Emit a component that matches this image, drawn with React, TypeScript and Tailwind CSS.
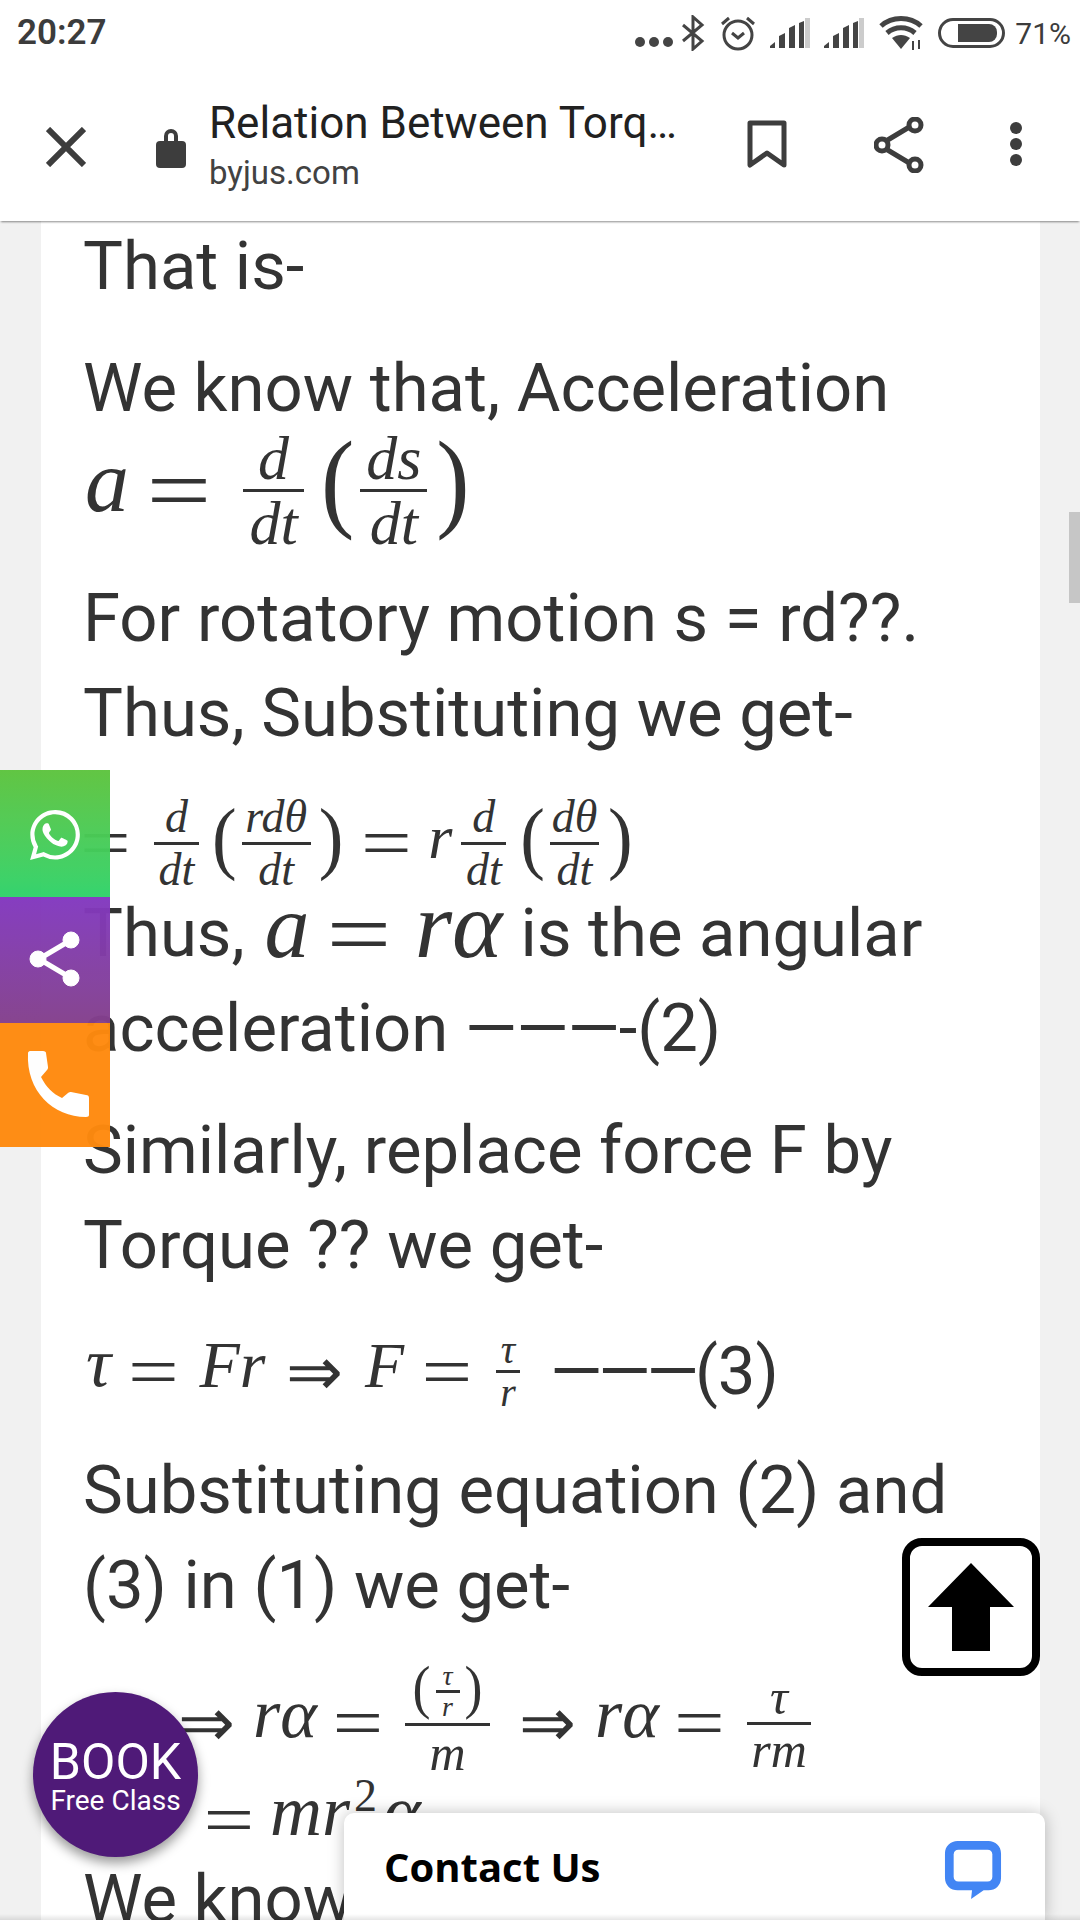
import type { ReactNode } from "react";

const serif = "font-['Liberation_Serif',serif]";

function Mi({ children, size = 64, className = "" }: { children: ReactNode; size?: number; className?: string }) {
  return (
    <span className={`${serif} block shrink-0 text-center italic leading-none ${className}`} style={{ fontSize: size }}>
      {children}
    </span>
  );
}

function Frac({
  num,
  den,
  width,
  size = 62,
  gap = 0,
  pad = 0,
  className = "",
}: {
  num: ReactNode;
  den: ReactNode;
  width: number;
  size?: number;
  gap?: number;
  pad?: number;
  className?: string;
}) {
  return (
    <span
      className={`${serif} flex shrink-0 flex-col items-center italic leading-none ${className}`}
      style={{ fontSize: size, width, paddingBottom: pad }}
    >
      <span style={{ marginBottom: gap }}>{num}</span>
      <span className="h-[3px] w-full bg-[#333]" />
      <span style={{ marginTop: gap }}>{den}</span>
    </span>
  );
}

function Paren({ side, size = 100, className = "" }: { side: string; size?: number; className?: string }) {
  return (
    <span className={`${serif} block shrink-0 font-normal not-italic leading-none ${className}`} style={{ fontSize: size }}>
      <span className="block -translate-y-[0.09em] scale-y-110">{side}</span>
    </span>
  );
}

function Eq({ size = 72, className = "" }: { size?: number; className?: string }) {
  return (
    <span className={`${serif} block shrink-0 scale-x-[1.25] text-center font-normal not-italic leading-none ${className}`} style={{ fontSize: size }}>
      =
    </span>
  );
}

function Arrow({ className = "" }: { className?: string }) {
  return (
    <span className={`block shrink-0 text-center font-['DejaVu_Sans_ExtraLight','DejaVu_Sans',sans-serif] text-[68px] font-extralight leading-none ${className}`}>
      ⇒
    </span>
  );
}

function StatusBar() {
  return (
    <div className="flex h-[66px] items-center justify-between bg-white pl-[17px] pr-[9px] text-[#3c3c3c]">
      <span className="text-[35px] font-semibold">20:27</span>
      <div className="flex items-center">
        <svg width="44" height="14" viewBox="0 0 44 14" fill="#444" className="mt-[18px]">
          <circle cx="7" cy="7" r="5" />
          <circle cx="21" cy="7" r="5" />
          <circle cx="35" cy="7" r="5" />
        </svg>
        <svg width="26" height="36" viewBox="0 0 26 36" fill="none" stroke="#444" strokeWidth="3" className="ml-[3px]">
          <path d="M3 10 22 26 13 34V2l9 8L3 26" />
        </svg>
        <svg width="38" height="36" viewBox="0 0 38 36" fill="none" stroke="#444" strokeWidth="3" className="ml-[13px]">
          <circle cx="19" cy="20" r="14" />
          <path d="M13 18l6 5 6-5M3 9l7-6M35 9l-7-6" />
        </svg>
        <svg width="40" height="30" viewBox="0 0 40 30" className="ml-[13px]">
          <path d="M0 30v-2l5-4v6zM9 30V18l6-3v15zM19 30V10l6-3v23z M29 30V5l5-2v27z" fill="#444" />
          <path d="M35 30V0h5v30z" fill="#ccc" />
        </svg>
        <svg width="40" height="30" viewBox="0 0 40 30" className="ml-[14px]">
          <path d="M0 30v-2l5-4v6zM9 30V18l6-3v15zM19 30V10l6-3v23z M29 30V5l5-2v27z" fill="#444" />
          <path d="M35 30V0h5v30z" fill="#ccc" />
        </svg>
        <svg width="46" height="34" viewBox="0 0 46 34" fill="none" stroke="#444" strokeWidth="5" className="ml-[15px]">
          <path d="M2 10C13 0 31 0 42 10M8 17c8-7 20-7 28 0" />
          <path d="M13 22c6-4 12-4 18 0l-9 11z" fill="#444" stroke="none" />
          <path d="M34 25v9M40 24v9" strokeWidth="2" />
        </svg>
        <span className="ml-[13px] flex h-[30px] w-[67px] items-center rounded-[15px] border-[3px] border-[#444] pl-[17px] pr-[5px]">
          <span className="h-[18px] w-full rounded-r-[8px] bg-[#444]" />
        </span>
        <span className="ml-[10px] text-[30px]">71%</span>
      </div>
    </div>
  );
}

function Toolbar() {
  return (
    <div className="relative z-10 flex h-[155px] items-center bg-white pl-[46px] shadow-[0_2px_2px_-1px_rgba(0,0,0,0.45)]">
      <svg width="40" height="40" viewBox="0 0 40 40" stroke="#3d3d3d" strokeWidth="6" className="mt-[6px] shrink-0">
        <path d="M2 2l36 36M38 2 2 38" />
      </svg>
      <svg width="32" height="42" viewBox="0 0 32 42" fill="#3d3d3d" className="ml-[69px] mt-[6px] shrink-0">
        <path d="M9 16V10a7 7 0 0 1 14 0v6h-4V10a3 3 0 0 0-6 0v6z" />
        <rect x="1" y="15" width="30" height="27" rx="4" />
      </svg>
      <div className="ml-[22px] mt-[4px] w-[521px] shrink-0">
        <div className="text-[44px] leading-[52px] text-[#212121]">Relation Between Torq…</div>
        <div className="mt-[2px] text-[33px] leading-[44px] text-[#424242]">byjus.com</div>
      </div>
      <svg width="40" height="50" viewBox="0 0 40 50" fill="none" stroke="#3d3d3d" strokeWidth="5" className="ml-[17px] mt-[2px] shrink-0">
        <path d="M3 3h34v42L20 33 3 45z" strokeLinejoin="round" />
      </svg>
      <svg width="50" height="56" viewBox="0 0 50 56" fill="none" stroke="#3d3d3d" strokeWidth="5" className="ml-[87px] mt-[2px] shrink-0">
        <path d="M12 24 37 9M12 32l25 15" />
        <circle cx="8" cy="28" r="6" />
        <circle cx="41" cy="8" r="6" />
        <circle cx="41" cy="48" r="6" />
      </svg>
      <svg width="14" height="46" viewBox="0 0 14 46" fill="#3d3d3d" className="ml-[85px] shrink-0">
        <circle cx="7" cy="7" r="6" />
        <circle cx="7" cy="23" r="6" />
        <circle cx="7" cy="39" r="6" />
      </svg>
    </div>
  );
}

function Article() {
  return (
    <div className="ml-[41px] h-[1700px] w-[999px] overflow-hidden bg-white pl-[42px] text-[67px] leading-[95px] text-[#333]">
      <p className="-mt-[2px]">That is-</p>

      <p className="mt-[27px]">We know that, Acceleration</p>
      <div className="flex h-[108px] items-center">
        <Mi size={88} className="ml-[2px] w-[40px] -translate-y-[8px]">a</Mi>
        <Eq size={92} className="ml-[26px] w-[56px]" />
        <Frac className="ml-[36px]" num="d" den="dt" width={61} />
        <Paren className="ml-[17px]" side="(" />
        <Frac className="ml-[6px]" num="ds" den="dt" width={67} />
        <Paren className="ml-[9px]" side=")" />
      </div>
      <p className="mt-[27px]">For rotatory motion s = rd??.</p>
      <p>Thus, Substituting we get-</p>

      <div className="mt-[36px] flex h-[92px] items-center">
        <Eq className="ml-[1px] w-[43px]" />
        <Frac className="ml-[27px]" num="d" den="dt" width={45} size={46} gap={2} />
        <Paren className="ml-[13px]" side="(" size={74} />
        <Frac className="ml-[5px]" num="rdθ" den="dt" width={69} size={46} gap={2} />
        <Paren className="ml-[8px]" side=")" size={74} />
        <Eq className="ml-[22px] w-[43px]" />
        <Mi size={62} className="ml-[20px] w-[24px] -translate-y-[6px]">r</Mi>
        <Frac className="ml-[9px]" num="d" den="dt" width={45} size={46} gap={2} />
        <Paren className="ml-[14px]" side="(" size={74} />
        <Frac className="ml-[5px]" num="dθ" den="dt" width={49} size={46} gap={2} />
        <Paren className="ml-[9px]" side=")" size={74} />
      </div>

      <div className="-mt-[3px] flex h-[95px] items-center">
        <span>Thus,</span>
        <Mi size={90} className="ml-[20px] w-[38px] -translate-y-[7px]">a</Mi>
        <Eq size={92} className="ml-[28px] w-[56px]" />
        <Mi size={96} className="ml-[28px] w-[88px] -translate-y-[9px]">rα</Mi>
        <span className="ml-[18px]">is the angular</span>
      </div>
      <p>
        acceleration <span className="tracking-[-1px]">———</span>-(2)
      </p>
      <p className="mt-[27px]">Similarly, replace force F by</p>
      <p>Torque ?? we get-</p>

      <div className="mt-[31px] flex h-[95px] items-center">
        <Mi size={70} className="ml-[1px] w-[29px] -translate-y-[9px]">τ</Mi>
        <Eq className="ml-[19px] w-[43px]" />
        <Mi size={66} className="ml-[23px] w-[69px] -translate-y-[7px]">Fr</Mi>
        <Arrow className="ml-[19px] w-[57px]" />
        <Mi className="ml-[22px] w-[39px] -translate-y-[6px]">F</Mi>
        <Eq className="ml-[22px] w-[42px]" />
        <Frac className="ml-[28px]" num="τ" den="r" width={24} size={40} />
        <span className="ml-[30px]">
          <span className="tracking-[-4px]">———</span>(3)
        </span>
      </div>

      <p className="mt-[24px]">Substituting equation (2) and</p>
      <p>(3) in (1) we get-</p>

      <div className="mt-[36px] flex h-[108px] items-center pl-[95px]">
        <Arrow className="w-[54px]" />
        <Mi size={70} className="ml-[21px] w-[63px] -translate-y-[9px]">rα</Mi>
        <Eq className="ml-[21px] w-[42px]" />
        <Frac
          className="ml-[26px]"
          width={85}
          size={50}
          gap={2}
          pad={6}
          num={
            <span className="flex items-center justify-center">
              <Paren side="(" size={54} />
              <Frac className="mx-[5px]" num="τ" den="r" width={24} size={28} />
              <Paren side=")" size={54} />
            </span>
          }
          den="m"
        />
        <Arrow className="ml-[29px] w-[54px]" />
        <Mi size={70} className="ml-[22px] w-[63px] -translate-y-[9px]">rα</Mi>
        <Eq className="ml-[21px] w-[41px]" />
        <Frac className="ml-[27px]" num="τ" den="rm" width={64} size={50} />
      </div>

      <div className="mt-[3px] flex h-[80px] items-center pl-[125px]">
        <Eq className="w-[42px]" />
        <Mi size={72} className="ml-[20px] w-[78px] -translate-y-[9px]">mr</Mi>
        <Mi size={46} className="ml-[6px] w-[22px] -translate-y-[24px] not-italic">2</Mi>
        <Mi size={72} className="ml-[7px] w-[35px] -translate-y-[9px]">α</Mi>
      </div>
      <p className="-mt-[8px]">We know</p>
    </div>
  );
}

function SideButtons() {
  return (
    <div className="absolute left-0 top-[770px] flex w-[110px] flex-col opacity-[0.97]">
      <div className="flex h-[127px] items-center justify-center bg-gradient-to-b from-[#5dc43e] to-[#2fd36a]">
        <svg width="50" height="50" viewBox="0 0 24 24" fill="#fff" className="mt-[2px]">
          <path d="M17.47 14.38c-.3-.15-1.76-.87-2.03-.97-.27-.1-.47-.15-.67.15-.2.3-.77.97-.94 1.16-.17.2-.35.22-.65.07-.3-.15-1.26-.46-2.39-1.48-.88-.79-1.48-1.76-1.65-2.06-.17-.3-.02-.46.13-.6.13-.13.3-.35.45-.52.15-.17.2-.3.3-.5.1-.2.05-.37-.03-.52-.07-.15-.67-1.61-.92-2.21-.24-.58-.49-.5-.67-.51h-.57c-.2 0-.52.07-.8.37-.27.3-1.04 1.02-1.04 2.48s1.07 2.88 1.21 3.07c.15.2 2.1 3.2 5.08 4.49.71.3 1.26.49 1.69.62.71.23 1.36.2 1.87.12.57-.08 1.76-.72 2.01-1.41.25-.7.25-1.29.17-1.41-.07-.13-.27-.2-.57-.35zM12.05 21.8h-.01a9.87 9.87 0 0 1-5.03-1.38l-.36-.21-3.74.98 1-3.65-.24-.37a9.86 9.86 0 0 1-1.51-5.26c0-5.45 4.44-9.88 9.89-9.88 2.64 0 5.12 1.03 6.99 2.9a9.82 9.82 0 0 1 2.89 6.99c0 5.45-4.44 9.88-9.89 9.88zM20.52 3.45A11.82 11.82 0 0 0 12.05 0C5.5 0 .16 5.34.16 11.89c0 2.1.55 4.14 1.59 5.95L.06 24l6.31-1.65a11.88 11.88 0 0 0 5.68 1.45c6.55 0 11.89-5.34 11.89-11.89 0-3.18-1.24-6.17-3.42-8.46z" />
        </svg>
      </div>
      <div className="flex h-[126px] items-center justify-center bg-gradient-to-b from-[#8338c0] to-[#84408c]">
        <svg width="52" height="56" viewBox="0 0 52 56" fill="#fff" stroke="#fff" className="mt-[-2px]">
          <path d="M10 28 42 9M10 28l32 19" strokeWidth="5" fill="none" />
          <circle cx="9" cy="28" r="8" />
          <circle cx="42" cy="9" r="8" />
          <circle cx="42" cy="47" r="8" />
        </svg>
      </div>
      <div className="flex h-[124px] items-center justify-center bg-[#ff8a0e]">
        <svg width="68" height="66" viewBox="0 0 68 66" fill="#fff" className="ml-[8px] mt-[-2px]">
          <path d="M3 2c0-1 1-2 2-2h13c2 0 3 1 3 2l2 14c0 1 0 2-1 3l-6 7c5 10 12 17 21 21l6-5c1-1 2-1 3-1l15 3c2 0 3 1 3 3v17c0 1-1 2-3 2C28 66 1 40 3 2z" />
        </svg>
      </div>
    </div>
  );
}

function ContactBar() {
  return (
    <div className="absolute left-[344px] top-[1813px] flex h-[107px] w-[701px] items-start justify-between rounded-t-[10px] bg-white pl-[40px] pr-[43px] pt-[28px] shadow-[0_0_16px_rgba(0,0,0,0.25)]">
      <span className="font-['Open_Sans',sans-serif] text-[40px] font-bold leading-[52px] text-black">Contact Us</span>
      <svg width="58" height="58" viewBox="0 0 58 60" fill="none" className="shrink-0">
        <path d="M13 0h32c7 0 13 5 13 13v25c0 8-6 13-13 13h-5l-13 9 1-9H13C6 51 0 46 0 38V13C0 5 6 0 13 0z" fill="#4285f4" />
        <path d="M14 9h30c3 0 5 2 5 5v23c0 3-2 5-5 5H14c-3 0-5-2-5-5V14c0-3 2-5 5-5z" fill="#fff" />
      </svg>
    </div>
  );
}

export default function App() {
  return (
    <div className="relative h-[1920px] w-[1080px] overflow-hidden bg-[#f1f1f1] font-['Roboto',sans-serif]">
      <StatusBar />
      <Toolbar />
      <Article />

      {/* scrollbar thumb */}
      <div className="absolute right-0 top-[512px] h-[91px] w-[11px] bg-[#c6c6c6]" />

      <SideButtons />

      {/* back to top */}
      <div className="absolute left-[902px] top-[1538px] flex h-[138px] w-[138px] items-center justify-center rounded-[20px] border-[8px] border-black bg-white">
        <svg width="86" height="88" viewBox="0 0 86 88" fill="#000">
          <path d="M43 0 86 44H62v44H24V44H0z" />
        </svg>
      </div>

      {/* book free class */}
      <div className="absolute left-[33px] top-[1692px] flex h-[165px] w-[165px] flex-col items-center justify-center rounded-full bg-[#4f1a78] pt-[5px] text-white shadow-[0_6px_12px_rgba(0,0,0,0.4)]">
        <span className="text-[50px] leading-[48px]">BOOK</span>
        <span className="text-[28px] leading-[30px]">Free Class</span>
      </div>

      <ContactBar />
      <div className="absolute bottom-0 left-0 h-[6px] w-full bg-gradient-to-b from-transparent to-black/10" />
    </div>
  );
}
